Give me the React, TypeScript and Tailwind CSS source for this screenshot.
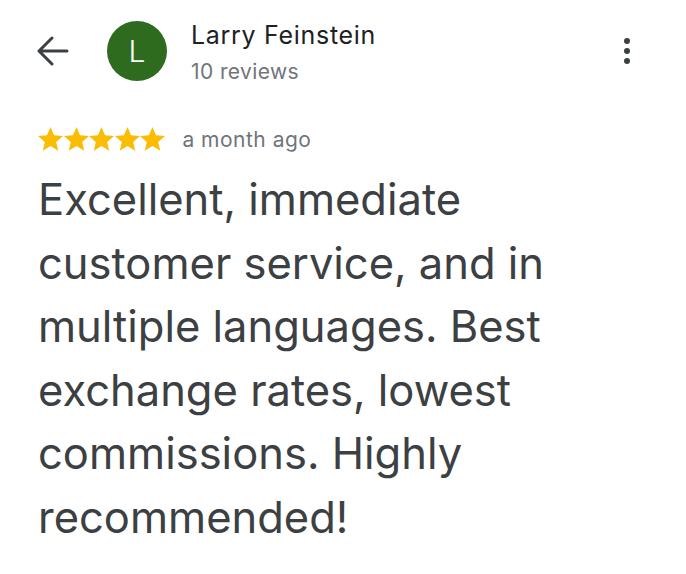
const font = { fontFamily: "Inter, Roboto, sans-serif" };

function BackArrow() {
  return (
    <svg width="32" height="32" viewBox="0 0 32 32" className="shrink-0">
      <path
        d="M2 16 H30 M15 3 L2 16 L15 29"
        fill="none"
        stroke="#3c4043"
        strokeWidth="3"
        strokeLinecap="round"
        strokeLinejoin="round"
      />
    </svg>
  );
}

function Stars() {
  return (
    <div className="flex items-center gap-[0.6px]">
      {[0, 1, 2, 3, 4].map((i) => (
        <svg key={i} width="25" height="25" viewBox="2 2 20 20">
          <path
            d="M12 17.27 18.18 21l-1.64-7.03L22 9.24l-7.19-.61L12 2 9.19 8.63 2 9.24l5.46 4.73L5.82 21z"
            fill="#fbbc04"
          />
        </svg>
      ))}
    </div>
  );
}

export default function App() {
  return (
    <div className="w-[686px] h-[574px] bg-white overflow-hidden" style={font}>
      <div className="flex items-start pl-[37px] pr-[56px] pt-[21px]">
        <div className="h-[60px] flex items-center">
          <BackArrow />
        </div>
        <div className="ml-[38px] w-[60px] h-[60px] rounded-full bg-[#2e6b1f] flex items-center justify-center text-white text-[30px] font-light shrink-0">
          L
        </div>
        <div className="ml-[24px] flex-1">
          <div className="text-[#202124] text-[25px] leading-[30px] tracking-[0.7px] -mt-[1px]">Larry Feinstein</div>
          <div className="text-[#70757a] text-[21px] leading-[28px] tracking-[0.4px] mt-[8px]">10 reviews</div>
        </div>
        <div className="h-[60px] flex flex-col items-center justify-center gap-[4px]">
          <span className="w-[6px] h-[6px] rounded-full bg-[#3c4043]" />
          <span className="w-[6px] h-[6px] rounded-full bg-[#3c4043]" />
          <span className="w-[6px] h-[6px] rounded-full bg-[#3c4043]" />
        </div>
      </div>

      <div className="pl-[38px] mt-[41px] flex items-center h-[25px]">
        <Stars />
        <span className="ml-[17px] text-[#70757a] text-[21px] leading-[24px] tracking-[0.5px]">a month ago</span>
      </div>

      <p className="pl-[38px] pr-[20px] mt-[16px] text-[#3c4043] text-[43.5px] leading-[63.5px] w-[620px]">
        Excellent, immediate customer service, and in multiple languages. Best
        exchange rates, lowest commissions. Highly recommended!
      </p>
    </div>
  );
}
